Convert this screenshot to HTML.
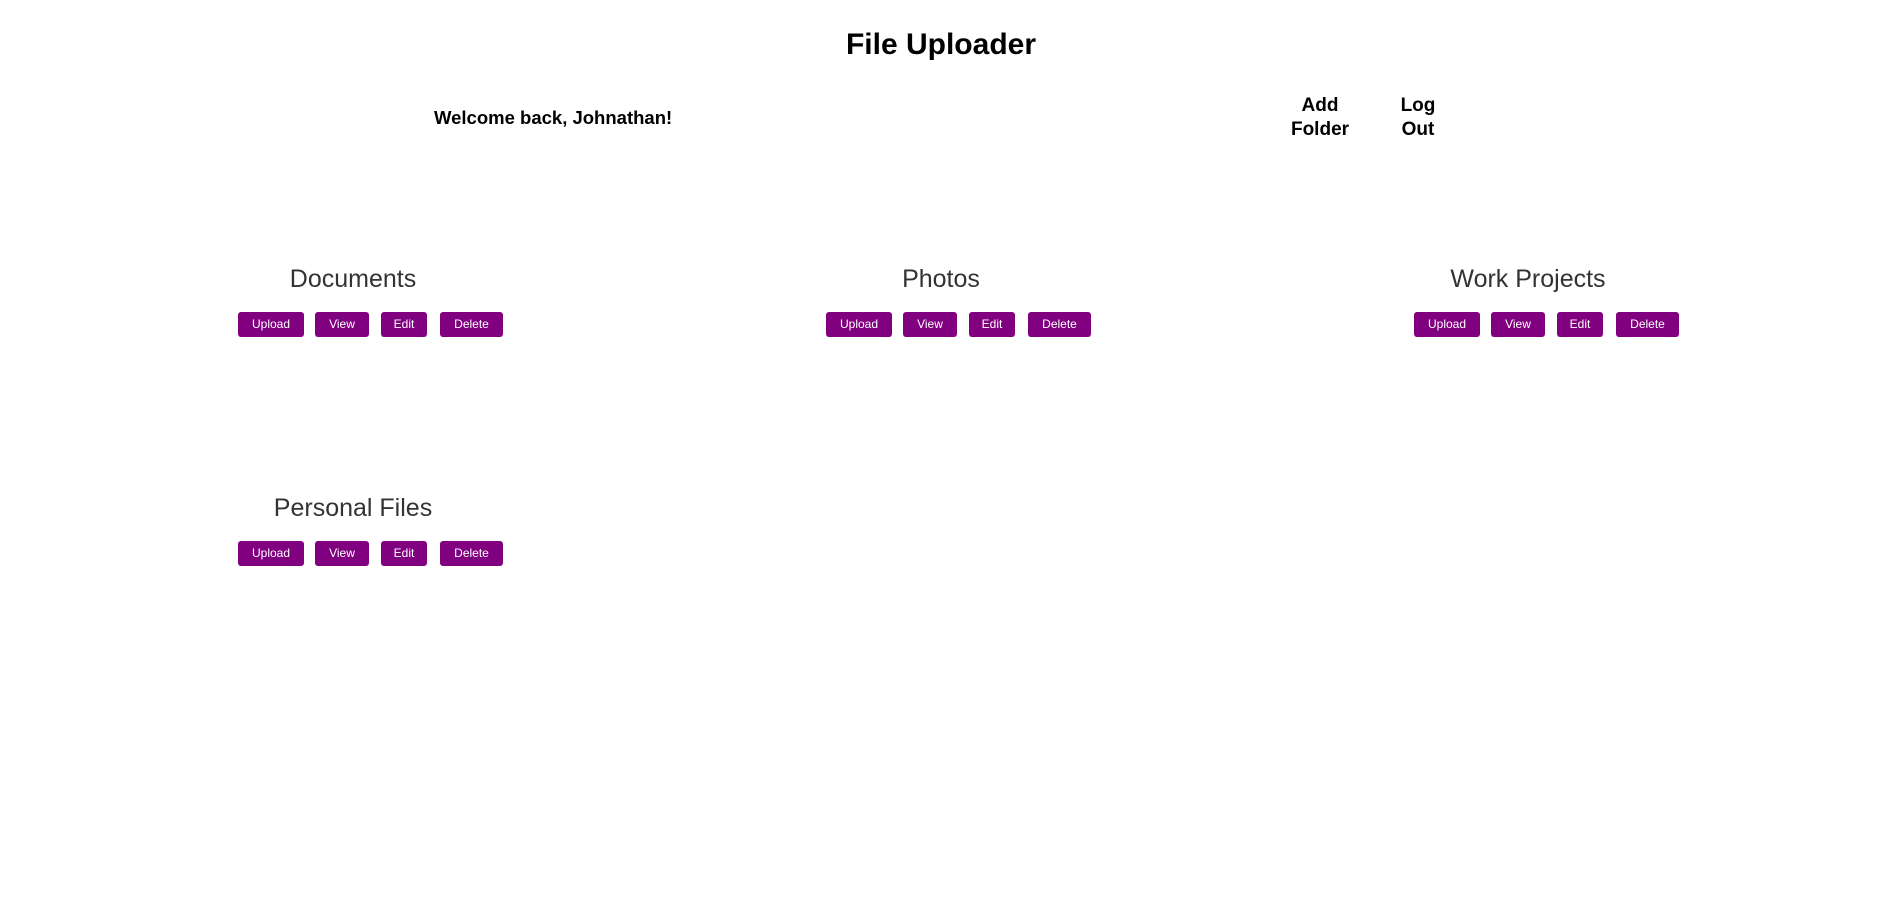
<!DOCTYPE html>
<html><head><meta charset="utf-8"><style>
body{margin:0;width:1887px;height:899px;background:#fff;font-family:"Liberation Sans",sans-serif;color:#000;position:relative;overflow:hidden}
.a{position:absolute}
h1{position:absolute;margin:0;left:0;width:1882px;text-align:center;top:28px;font-size:30px;font-weight:bold}
.w{left:434px;top:107px;font-size:18.5px;font-weight:bold}
.n{font-size:19px;font-weight:bold;text-align:center;line-height:24px;top:94px}
.col{position:absolute;width:588px;text-align:center}
.col h2{margin:0;font-weight:normal;font-size:25px;color:#333;height:34px}
.btns{position:absolute;top:47px;height:25px}
.b{position:absolute;top:0;height:25px;background:#800080;color:#fff;font-size:12px;line-height:25px;text-align:center;border-radius:3px}
</style></head><body>
<h1>File Uploader</h1>
<div class="a w">Welcome back, Johnathan!</div>
<div class="a n" style="left:1285px;width:70px">Add<br>Folder</div>
<div class="a n" style="left:1388px;width:60px">Log<br>Out</div>

<div class="col" style="left:59px;top:265px"><h2>Documents</h2><div class="btns" style="left:179px"><div class="b" style="left:0;width:66px">Upload</div><div class="b" style="left:77px;width:54px">View</div><div class="b" style="left:143px;width:46px">Edit</div><div class="b" style="left:202px;width:63px">Delete</div></div></div>
<div class="col" style="left:647px;top:265px"><h2>Photos</h2><div class="btns" style="left:179px"><div class="b" style="left:0;width:66px">Upload</div><div class="b" style="left:77px;width:54px">View</div><div class="b" style="left:143px;width:46px">Edit</div><div class="b" style="left:202px;width:63px">Delete</div></div></div>
<div class="col" style="left:1234px;top:265px"><h2>Work Projects</h2><div class="btns" style="left:180px"><div class="b" style="left:0;width:66px">Upload</div><div class="b" style="left:77px;width:54px">View</div><div class="b" style="left:143px;width:46px">Edit</div><div class="b" style="left:202px;width:63px">Delete</div></div></div>
<div class="col" style="left:59px;top:494px"><h2>Personal Files</h2><div class="btns" style="left:179px;top:47px"><div class="b" style="left:0;width:66px">Upload</div><div class="b" style="left:77px;width:54px">View</div><div class="b" style="left:143px;width:46px">Edit</div><div class="b" style="left:202px;width:63px">Delete</div></div></div>
</body></html>
